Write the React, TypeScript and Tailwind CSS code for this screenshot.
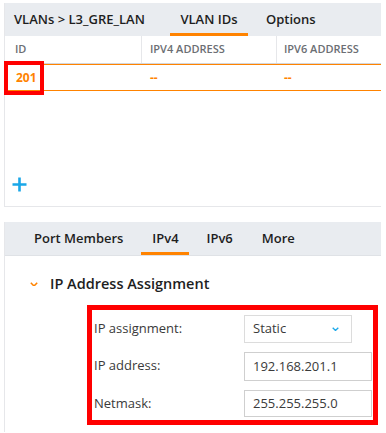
import React from 'react';

const font = { fontFamily: '"Open Sans", "Noto Sans", sans-serif' };

function Plus() {
  return (
    <svg width="15" height="15" viewBox="0 0 15 15">
      <path d="M7.5 0.5v14M0.5 7.5h14" stroke="#1aa7e8" strokeWidth="2.6" />
    </svg>
  );
}

function Chevron({ color, size = 8 }: { color: string; size?: number }) {
  return (
    <svg width={size} height={size * 0.6} viewBox="0 0 10 6">
      <path d="M1 1l4 4 4-4" fill="none" stroke={color} strokeWidth="1.9" />
    </svg>
  );
}

export default function App() {
  return (
    <div className="w-[386px] h-[433px] bg-white overflow-hidden pt-[3px] pl-[4px]" style={font}>
      {/* VLAN IDs panel */}
      <div className="relative w-[377px] h-[204px] border-l border-b border-[#e6e7ea] flex flex-col">
        <div className="h-[33px] bg-[#e9ecf0] flex items-stretch text-[13px] font-semibold text-[#1e1e1e]">
          <div className="flex items-center pl-[9px] w-[165px]">VLANs &gt; L3_GRE_LAN</div>
          <div className="flex items-center px-[10px] w-[78px] justify-center border-b-[3px] border-[#ff8300] pt-[3px]">VLAN IDs</div>
          <div className="flex items-center pl-[18px]">Options</div>
        </div>
        <div className="h-[28px] grid grid-cols-[137px_135px_1fr] border-b border-[#d4d6da] text-[11px] font-semibold text-[#6b6e73]">
          <div className="flex items-center pl-[10px] border-r border-[#e6e7ea]">ID</div>
          <div className="flex items-center pl-[8px] border-r border-[#e6e7ea]">IPV4 ADDRESS</div>
          <div className="flex items-center pl-[7px]">IPV6 ADDRESS</div>
        </div>
        <div className="h-[27px] grid grid-cols-[137px_135px_1fr] border-t border-b border-[#ff8300] text-[12px] font-bold text-[#ff8300]">
          <div className="flex items-center pl-[11px]">201</div>
          <div className="flex items-center pl-[8px]">--</div>
          <div className="flex items-center pl-[7px]">--</div>
        </div>
        <div className="flex-1 flex items-end pl-[7px] pb-[14px]">
          <Plus />
        </div>
        <div className="absolute left-[-1px] top-[58px] w-[40px] h-[34px] border-[4px] border-[#ff0000]" />
      </div>

      {/* Detail panel */}
      <div className="mt-[15px] w-[377px] h-[210px] border-l border-[#e6e7ea]">
        <div className="h-[34px] bg-[#e9ecf0] border-b border-[#dfe2e6] flex items-stretch pl-[19px] text-[13px] font-semibold text-[#1e1e1e]">
          <div className="flex items-center px-[10px] mr-[8px]">Port Members</div>
          <div className="flex items-center justify-center w-[48px] border-b-[3px] border-[#ff8300] pt-[3px] mr-[9px]">IPv4</div>
          <div className="flex items-center px-[8px] mr-[13px]">IPv6</div>
          <div className="flex items-center px-[8px]">More</div>
        </div>
        <div className="flex items-center h-[20px] mt-[18px] pl-[25px] gap-[12px] text-[14.5px] font-semibold text-[#1e1e1e]">
          <Chevron color="#ff8300" />
          <span>IP Address Assignment</span>
        </div>
        <div className="ml-[82px] mt-[11px] w-[291px] h-[120px] border-[5px] border-[#ff0000] grid grid-cols-[152px_128px] content-start pt-[5px] text-[13px] text-[#3a3a3a]">
          <div className="flex items-center h-[28px] pl-[2px]">IP assignment:</div>
          <div className="h-[28px] w-[108px] border border-[#dcdcdc] flex items-center justify-between pl-[8px] pr-[12px]">
            <span>Static</span>
            <Chevron color="#1aa7e8" size={7} />
          </div>
          <div className="flex items-center h-[28px] mt-[9px] pl-[2px]">IP address:</div>
          <div className="h-[29px] mt-[9px] border border-[#cfcfcf] flex items-center pl-[8px]">192.168.201.1</div>
          <div className="flex items-center h-[27px] mt-[9px] pl-[2px]">Netmask:</div>
          <div className="h-[27px] mt-[9px] border border-[#cfcfcf] flex items-center pl-[8px]">255.255.255.0</div>
        </div>
      </div>
    </div>
  );
}
